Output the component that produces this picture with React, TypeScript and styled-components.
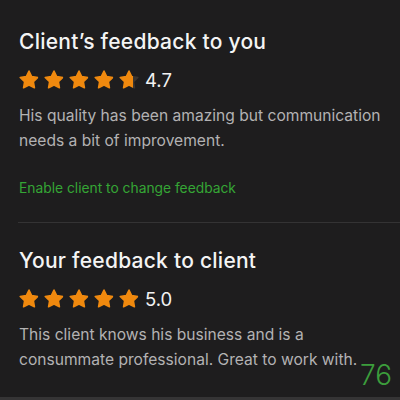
import styled, { createGlobalStyle } from 'styled-components';

const GlobalStyle = createGlobalStyle`
  html, body {
    margin: 0;
    padding: 0;
    background: #1e1d1e;
  }
  body {
    font-family: Inter, "Liberation Sans", sans-serif;
    -webkit-font-smoothing: antialiased;
  }
`;

type Feedback = {
  title: string;
  rating: number;
  comment: string;
  action?: string;
};

const feedbacks: Feedback[] = [
  {
    title: 'Client’s feedback to you',
    rating: 4.7,
    comment:
      'His quality has been amazing but communication needs a bit of improvement.',
    action: 'Enable client to change feedback',
  },
  {
    title: 'Your feedback to client',
    rating: 5.0,
    comment:
      'This client knows his business and is a consummate professional. Great to work with.',
  },
];

const Page = styled.div`
  position: relative;
  width: 400px;
  height: 400px;
  box-sizing: border-box;
  overflow: hidden;
  background: #1e1d1e;
  border-bottom: 3px solid #353435;
`;

// the second block hangs off a divider that starts at the text column
const Section = styled.section<{ divided?: boolean }>`
  display: flex;
  flex-direction: column;
  padding: ${(p) => (p.divided ? '25px 0 0 1px' : '29px 0 24px 19px')};
  margin-left: ${(p) => (p.divided ? '18px' : '0')};
  border-top: ${(p) => (p.divided ? '1px solid #343334' : 'none')};
`;

const Title = styled.h2`
  margin: 0;
  font-size: 21px;
  line-height: 26px;
  font-weight: 500;
  color: #f4f4f4;
  letter-spacing: 0.25px;
`;

const RatingRow = styled.div`
  display: flex;
  align-items: center;
  margin-top: 14px;
  height: 22px;
`;

const Stars = styled.div`
  display: flex;
  gap: 5px;
`;

const Score = styled.span`
  margin-left: 6px;
  font-size: 18.5px;
  color: #f2f2f2;
  font-weight: 400;
`;

const Comment = styled.p`
  margin: 12px 0 0;
  width: 372px;
  font-size: 15.6px;
  line-height: 25px;
  color: #b3b2b3;
`;

const Action = styled.a`
  margin-top: 25px;
  font-size: 13.8px;
  line-height: 20px;
  color: #35a535;
  text-decoration: none;
`;

const PageNumber = styled.span`
  position: absolute;
  right: 8px;
  bottom: 5px;
  font-size: 28px;
  font-weight: 300;
  color: #3c9d3c;
`;

const STAR_PATH =
  'M12 2.6l2.85 5.8 6.4.93-4.63 4.5 1.1 6.37L12 17.2l-5.72 3 1.1-6.37-4.63-4.5 6.4-.93z';

function Star({ fill, id }: { fill: number; id: string }) {
  return (
    <svg width="20" height="20" viewBox="1.5 1.5 21 21">
      <defs>
        <linearGradient id={id}>
          <stop offset={fill} stopColor="#f0890e" />
          <stop offset={fill} stopColor="#3b3530" />
        </linearGradient>
      </defs>
      <path
        d={STAR_PATH}
        fill={`url(#${id})`}
        stroke={`url(#${id})`}
        strokeWidth="1.6"
        strokeLinejoin="round"
      />
    </svg>
  );
}

function StarRating({ value, name }: { value: number; name: string }) {
  return (
    <Stars>
      {[0, 1, 2, 3, 4].map((i) => (
        <Star
          key={i}
          id={`${name}-${i}`}
          fill={Math.max(0, Math.min(1, value - i))}
        />
      ))}
    </Stars>
  );
}

export default function App() {
  return (
    <>
      <GlobalStyle />
      <Page>
        {feedbacks.map((f, idx) => (
          <Section key={idx} divided={idx > 0}>
            <Title>{f.title}</Title>
            <RatingRow>
              <StarRating value={f.rating} name={`fb${idx}`} />
              <Score>{f.rating.toFixed(1)}</Score>
            </RatingRow>
            <Comment>{f.comment}</Comment>
            {f.action && <Action href="#">{f.action}</Action>}
          </Section>
        ))}
        <PageNumber>76</PageNumber>
      </Page>
    </>
  );
}
